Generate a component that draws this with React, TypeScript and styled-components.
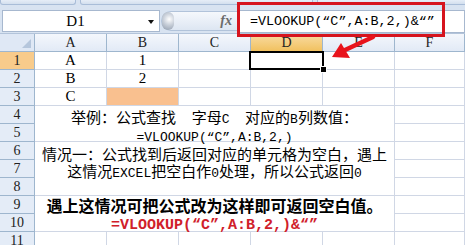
import React from "react";
import styled, { createGlobalStyle, css } from "styled-components";

const GlobalStyle = createGlobalStyle`
  html, body {
    margin: 0;
    padding: 0;
    background: #fff;
  }
  body {
    overflow: hidden;
  }
`;

const RED = "#d6141e";
const GRID = "#d0d7e5";
const HEAD_BORDER = "#9eb6ce";

const Frame = styled.div`
  position: relative;
  width: 465px;
  height: 245px;
  overflow: hidden;
  background: #fff;
  font-family: "Noto Sans CJK SC", sans-serif;
  color: #000;
`;

const RibbonEdge = styled.div`
  height: 9px;
  display: flex;
  gap: 4px;
  align-items: flex-start;
  background: #d8e3f1;
`;

const RibbonGroup = styled.div<{ $w: number }>`
  flex-shrink: 0;
  width: ${({ $w }) => $w}px;
  height: 5px;
  box-sizing: border-box;
  border: 1px solid #a9bdd8;
  border-top: none;
  border-radius: 0 0 3px 3px;
  background: linear-gradient(#e6edf7, #d3dfee);
`;

const FormulaBar = styled.div`
  height: 25px;
  box-sizing: border-box;
  display: flex;
  align-items: center;
  padding-left: 2px;
  background: #d8e3f1;
  border-bottom: 1px solid #b3c4da;
`;

const NameBox = styled.div`
  width: 158px;
  height: 22px;
  box-sizing: border-box;
  display: flex;
  align-items: center;
  background: #fff;
  border: 1px solid #a7b8cf;
`;

const NameText = styled.span`
  flex: 1;
  text-align: center;
  font-family: "Liberation Serif", serif;
  font-size: 15px;
`;

const DropArrow = styled.span`
  width: 0;
  height: 0;
  margin: 1px 5px 0 0;
  border-left: 3.5px solid transparent;
  border-right: 3.5px solid transparent;
  border-top: 4px solid #111;
`;

const FxStrip = styled.div`
  width: 76px;
  height: 20px;
  margin-left: 1px;
  box-sizing: border-box;
  display: flex;
  align-items: center;
  border: 1px solid #b1c3da;
  border-right: none;
  border-radius: 10px 0 0 10px;
  background: linear-gradient(#f5f8fc, #dde6f2);
`;

const Knob = styled.span`
  width: 12px;
  height: 18px;
  border-radius: 9px;
  background: radial-gradient(circle at 60% 40%, #ffffff 0, #c8cfd9 45%, #8e9aab 100%);
`;

const FxLabel = styled.span`
  margin-left: auto;
  margin-right: 5px;
  font-family: "Liberation Serif", serif;
  font-style: italic;
  font-weight: bold;
  font-size: 14px;
  color: #6b6b6b;
`;

const FormulaInput = styled.div`
  flex: 1;
  height: 23px;
  box-sizing: border-box;
  display: flex;
  align-items: center;
  padding-left: 12px;
  background: #fff;
  border: 1px solid #a7b8cf;
  font-family: "Liberation Mono", monospace;
  font-size: 13.4px;
  white-space: pre;
`;

const Sheet = styled.div`
  display: grid;
  grid-template-columns: 35px repeat(5, 72px) 1fr;
  grid-auto-rows: 18px;
`;

const headFont = css`
  font-family: "Liberation Serif", serif;
  font-size: 14px;
  color: #222;
`;

const Corner = styled.div`
  position: relative;
  box-sizing: border-box;
  background: #dfe8f5;
  border-right: 1px solid ${HEAD_BORDER};
  border-bottom: 1px solid ${HEAD_BORDER};
  &::after {
    content: "";
    position: absolute;
    right: 3px;
    bottom: 3px;
    border-left: 9px solid transparent;
    border-bottom: 9px solid #b5c6dc;
  }
`;

const ColHead = styled.div<{ $active?: boolean }>`
  ${headFont};
  box-sizing: border-box;
  display: flex;
  align-items: center;
  justify-content: center;
  border-right: 1px solid ${HEAD_BORDER};
  border-bottom: 1px solid ${HEAD_BORDER};
  background: ${({ $active }) =>
    $active
      ? "linear-gradient(#f9dca4, #f1c15f)"
      : "linear-gradient(#f4f7fc, #e2eaf6)"};
`;

const RowHead = styled.div<{ $active?: boolean }>`
  ${headFont};
  box-sizing: border-box;
  display: flex;
  align-items: center;
  justify-content: center;
  border-right: 1px solid ${HEAD_BORDER};
  border-bottom: 1px solid ${HEAD_BORDER};
  background: ${({ $active }) => ($active ? "#f8cb8b" : "#e4ecf7")};
`;

const Cell = styled.div<{ $fill?: string; $selected?: boolean }>`
  position: relative;
  box-sizing: border-box;
  display: flex;
  align-items: center;
  justify-content: center;
  border-right: 1px solid ${GRID};
  border-bottom: 1px solid ${GRID};
  background: ${({ $fill }) => $fill ?? "#fff"};
  font-family: "Liberation Serif", serif;
  font-size: 15px;
  ${({ $selected }) =>
    $selected &&
    css`
      &::after {
        content: "";
        position: absolute;
        left: -2px;
        top: -1px;
        right: -2px;
        bottom: -1px;
        border: 2px solid #000;
        z-index: 1;
      }
      &::before {
        content: "";
        position: absolute;
        right: -5px;
        bottom: -4px;
        width: 5px;
        height: 5px;
        background: #000;
        border: 1px solid #fff;
        z-index: 2;
      }
    `}
`;

const Merged = styled.div<{ $span: number; $pad: number }>`
  grid-column: span 5;
  grid-row: span ${({ $span }) => $span};
  box-sizing: border-box;
  display: flex;
  flex-direction: column;
  align-items: center;
  padding-top: ${({ $pad }) => $pad}px;
  border-right: 1px solid ${GRID};
  border-bottom: 1px solid ${GRID};
  white-space: pre;
`;

const Line = styled.div<{ $h: number; $bold?: boolean; $color?: string; $size?: number }>`
  height: ${({ $h }) => $h}px;
  line-height: ${({ $h }) => $h}px;
  font-size: ${({ $size }) => $size ?? 15}px;
  font-weight: ${({ $bold }) => ($bold ? 700 : 400)};
  color: ${({ $color }) => $color ?? "#000"};
`;

const Lat = styled.span<{ $size?: number }>`
  font-family: "Liberation Mono", monospace;
  font-size: ${({ $size }) => $size ?? 13}px;
`;

const Highlight = styled.div`
  position: absolute;
  left: 237px;
  top: 2px;
  width: 208px;
  height: 35px;
  box-sizing: border-box;
  border: 3px solid ${RED};
  pointer-events: none;
`;

const ArrowLayer = styled.svg`
  position: absolute;
  left: 0;
  top: 0;
  pointer-events: none;
`;

// latin runs are drawn in a mono face, the rest in the CJK face
const Mixed = ({ text, size }: { text: string; size?: number }) => (
  <>
    {text.split(/([\x20-\x7E“”]+)/).map((part, i) =>
      /[\x20-\x7E“”]/.test(part) ? (
        <Lat key={i} $size={size}>
          {part}
        </Lat>
      ) : (
        part
      )
    )}
  </>
);

const cols = ["A", "B", "C", "D", "E", "F"];
const simple: Record<number, (string | null)[]> = {
  1: ["A", "1", null, null, null],
  2: ["B", "2", null, null, null],
  3: ["C", null, null, null, null],
  11: [null, null, null, null, null],
};

const FORMULA = "=VLOOKUP(“C”,A:B,2,)";

const App = () => {
  const rows = Array.from({ length: 11 }, (_, i) => i + 1);

  return (
    <Frame>
      <GlobalStyle />
      <RibbonEdge>
        <RibbonGroup $w={76} />
        <RibbonGroup $w={233} />
        <RibbonGroup $w={160} />
      </RibbonEdge>

      <FormulaBar>
        <NameBox>
          <NameText>D1</NameText>
          <DropArrow />
        </NameBox>
        <FxStrip>
          <Knob />
          <FxLabel>fx</FxLabel>
        </FxStrip>
        <FormulaInput>{FORMULA + "&“”"}</FormulaInput>
      </FormulaBar>

      <Sheet>
        <Corner />
        {cols.map((c) => (
          <ColHead key={c} $active={c === "D"}>
            {c}
          </ColHead>
        ))}

        {rows.map((r) => (
          <React.Fragment key={r}>
            <RowHead $active={r === 1}>{r}</RowHead>
            {simple[r] &&
              simple[r].map((v, ci) => (
                <Cell
                  key={ci}
                  $fill={r === 3 && ci === 1 ? "#f9c08f" : undefined}
                  $selected={r === 1 && ci === 3}
                >
                  {v}
                </Cell>
              ))}
            {r === 4 && (
              <Merged $span={2} $pad={2}>
                <Line $h={18}>
                  <Mixed text="举例：公式查找  字母C  对应的B列数值：" />
                </Line>
                <Line $h={18}>
                  <Lat>{FORMULA}</Lat>
                </Line>
              </Merged>
            )}
            {r === 6 && (
              <Merged $span={3} $pad={3}>
                <Line $h={17}>情况一：公式找到后返回对应的单元格为空白，遇上</Line>
                <Line $h={17}>
                  <Mixed text="这情况EXCEL把空白作0处理，所以公式返回0" />
                </Line>
              </Merged>
            )}
            {r === 9 && (
              <Merged $span={2} $pad={0}>
                <Line $h={18} $bold $size={16}>
                  遇上这情况可把公式改为这样即可返回空白值。
                </Line>
                <Line $h={18} $bold $color="#d0202a">
                  <Lat $size={15}>{FORMULA + "&“”"}</Lat>
                </Line>
              </Merged>
            )}
            <Cell />
          </React.Fragment>
        ))}
      </Sheet>

      <Highlight />
      <ArrowLayer width={465} height={245}>
        <line x1={373} y1={37} x2={345} y2={50} stroke="#e8141c" strokeWidth={4.5} strokeLinecap="round" />
        <polygon points="332,57 341,43 350,58" fill="#e8141c" />
      </ArrowLayer>
    </Frame>
  );
};

export default App;
